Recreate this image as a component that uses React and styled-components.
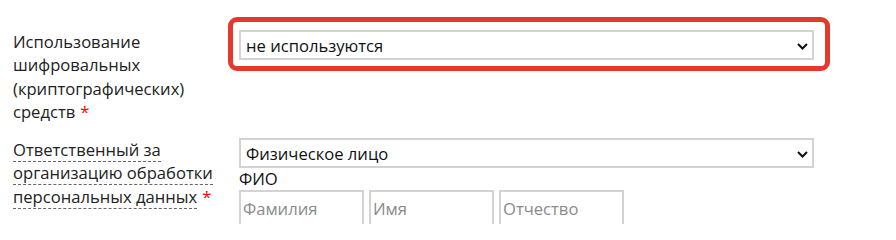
import React from 'react'
import styled, { createGlobalStyle } from 'styled-components'

const GlobalStyle = createGlobalStyle`
  body {
    margin: 0;
    background: #fff;
    font-family: "Open Sans", "Liberation Sans", sans-serif;
    font-size: 16.6px;
    color: #222;
  }
`

const Form = styled.form`
  display: grid;
  grid-template-columns: 215px 602px;
  row-gap: 2px;
  padding: 17px 0 0 13px;
`

const Label = styled.div`
  padding-top: 13px;
  line-height: 23.3px;
`

const Hint = styled.span`
  border-bottom: 1px dashed #666;
`

const Required = styled.span`
  color: #f00;
  display: inline-block;
  margin-left: 5px;
`

const Field = styled.div`
  border: 5px solid ${p => (p.$highlight ? '#e4392b' : 'transparent')};
  border-radius: 9px;
  padding: 8px 11px 6px 6px;
  align-self: start;
`

const SelectWrap = styled.div`
  position: relative;
`

const Select = styled.select`
  appearance: none;
  display: block;
  width: 100%;
  height: 30px;
  margin: 0;
  padding: 0 24px 0 5px;
  border: 2px solid #d3d3d3;
  border-radius: 0;
  background: #fff;
  font: inherit;
  color: #111;
`

const Chevron = styled.svg`
  position: absolute;
  right: 6px;
  top: 13px;
  pointer-events: none;
`

const SubLabel = styled.div`
  line-height: 22px;
  color: #111;
`

const NameRow = styled.div`
  display: flex;
  gap: 5px;
`

const NameInput = styled.input`
  width: 125px;
  height: 34px;
  box-sizing: border-box;
  margin: 0;
  padding: 0 2px;
  border: 2px solid #d3d3d3;
  border-bottom: none;
  font: inherit;
  color: #111;
  &::placeholder {
    color: #8a8a8a;
  }
`

const Dropdown = ({ value, options }) => (
  <SelectWrap>
    <Select defaultValue={value}>
      {options.map(o => (
        <option key={o}>{o}</option>
      ))}
    </Select>
    <Chevron width="11" height="7" viewBox="0 0 11 7">
      <path d="M1 1l4.5 4.5L10 1" fill="none" stroke="#111" strokeWidth="2" />
    </Chevron>
  </SelectWrap>
)

export default function App() {
  return (
    <>
      <GlobalStyle />
      <Form>
        <Label>
          Использование шифровальных (криптографических) средств<Required>*</Required>
        </Label>
        <Field $highlight>
          <Dropdown value="не используются" options={['не используются', 'используются']} />
        </Field>

        <Label>
          <Hint>Ответственный за организацию обработки персональных данных</Hint>
          <Required>*</Required>
        </Label>
        <Field>
          <Dropdown value="Физическое лицо" options={['Физическое лицо', 'Юридическое лицо']} />
          <SubLabel>ФИО</SubLabel>
          <NameRow>
            <NameInput placeholder="Фамилия" />
            <NameInput placeholder="Имя" />
            <NameInput placeholder="Отчество" />
          </NameRow>
        </Field>
      </Form>
    </>
  )
}
